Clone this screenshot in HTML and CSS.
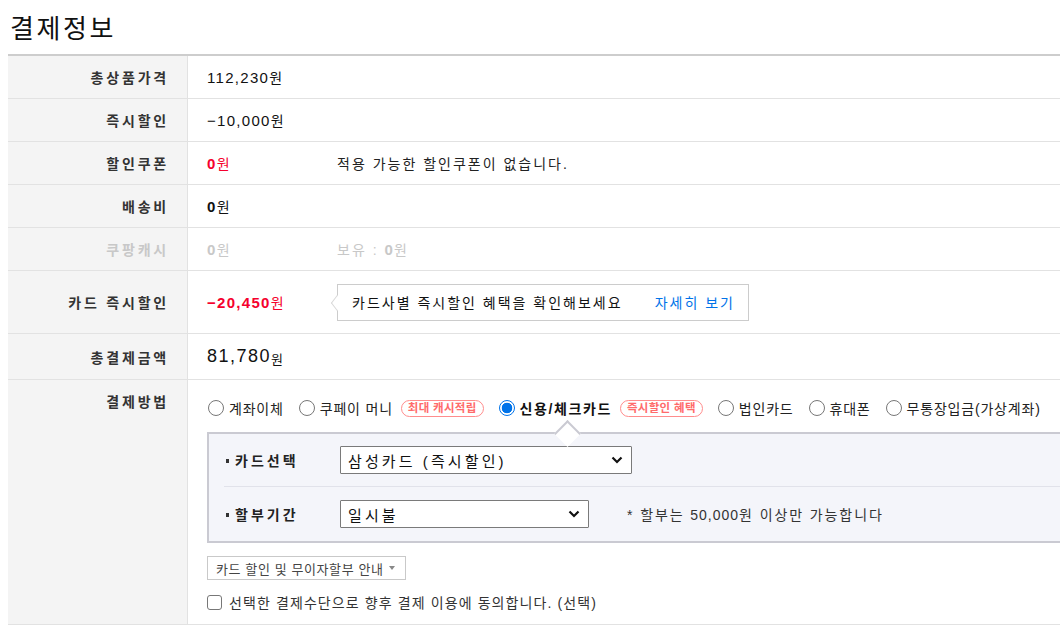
FILE: index.html
```html
<!DOCTYPE html>
<html lang="ko">
<head>
    <meta charset="UTF-8">
    <title>결제정보</title>
    <link rel="stylesheet" href="styles.css">
</head>
<body>
    <h1 class="title">결제정보</h1>

    <div class="pay-table">
        <div class="row">
            <div class="label">총상품가격</div>
            <div class="value"><span class="num">112,230</span>원</div>
        </div>
        <div class="row">
            <div class="label">즉시할인</div>
            <div class="value"><span class="num">−10,000</span>원</div>
        </div>
        <div class="row">
            <div class="label">할인쿠폰</div>
            <div class="value">
                <span class="amount red"><b class="num">0</b>원</span>
                <span class="note">적용 가능한 할인쿠폰이 없습니다.</span>
            </div>
        </div>
        <div class="row">
            <div class="label">배송비</div>
            <div class="value"><b class="num">0</b>원</div>
        </div>
        <div class="row disabled">
            <div class="label">쿠팡캐시</div>
            <div class="value">
                <span class="amount"><b class="num">0</b>원</span>
                <span class="note">보유 : <b class="num">0</b>원</span>
            </div>
        </div>
        <div class="row row-card">
            <div class="label">카드 즉시할인</div>
            <div class="value">
                <span class="amount red"><b class="num">−20,450</b>원</span>
                <div class="tip">
                    <span>카드사별 즉시할인 혜택을 확인해보세요</span>
                    <a href="#" class="tip-link">자세히 보기</a>
                </div>
            </div>
        </div>
        <div class="row row-total">
            <div class="label">총결제금액</div>
            <div class="value"><span class="num total">81,780</span><span class="won">원</span></div>
        </div>
        <div class="row row-method">
            <div class="label">결제방법</div>
            <div class="value method">
                <div class="radios">
                    <label class="radio"><span class="dot"></span>계좌이체</label>
                    <label class="radio"><span class="dot"></span>쿠페이 머니<span class="badge">최대 캐시적립</span></label>
                    <label class="radio checked"><span class="dot"></span>신용/체크카드<span class="badge">즉시할인 혜택</span></label>
                    <label class="radio"><span class="dot"></span>법인카드</label>
                    <label class="radio"><span class="dot"></span>휴대폰</label>
                    <label class="radio"><span class="dot"></span>무통장입금(가상계좌)</label>
                </div>

                <div class="card-panel">
                    <div class="panel-row first">
                        <div class="panel-label">카드선택</div>
                        <div class="select wide">
                            <span>삼성카드 (즉시할인)</span>
                            <svg width="12" height="8" viewBox="0 0 12 8"><path d="M1.5 1.5 L6 6 L10.5 1.5" fill="none" stroke="#111" stroke-width="2.2"/></svg>
                        </div>
                    </div>
                    <div class="panel-row">
                        <div class="panel-label">할부기간</div>
                        <div class="select">
                            <span>일시불</span>
                            <svg width="12" height="8" viewBox="0 0 12 8"><path d="M1.5 1.5 L6 6 L10.5 1.5" fill="none" stroke="#111" stroke-width="2.2"/></svg>
                        </div>
                        <span class="panel-note">* 할부는 <span class="num">50,000</span>원 이상만 가능합니다</span>
                    </div>
                </div>

                <button class="guide-btn">카드 할인 및 무이자할부 안내 <span class="caret"></span></button>

                <label class="agree"><span class="box"></span>선택한 결제수단으로 향후 결제 이용에 동의합니다. (선택)</label>
            </div>
        </div>
    </div>
</body>
</html>
```

FILE: styles.css
```css
:root {
    --label-bg: #f4f4f4;
    --line: #e2e2e2;
    --red: #f5002d;
    --blue: #0073e9;
    --text: #111;
    --label-text: #333;
}

* {
    box-sizing: border-box;
}

html,
body {
    overflow: hidden;
}

body {
    margin: 8px 0 0 8px;
    font-family: "Liberation Sans", "Noto Sans CJK KR", sans-serif;
    font-size: 14px;
    color: var(--text);
    background: #fff;
}

.title {
    margin: 0 0 6px;
    padding: 3px 2px 0;
    font-size: 26px;
    line-height: 37px;
    font-weight: 400;
    letter-spacing: 2.6px;
    color: #111;
}

.pay-table {
    width: 1080px;
    border-top: 2px solid #cdcdcd;
}

.row {
    display: grid;
    grid-template-columns: 180px 1fr;
    border-bottom: 1px solid var(--line);
    min-height: 43px;
}

.label {
    background: var(--label-bg);
    border-right: 1px solid var(--line);
    padding-right: 18px;
    font-weight: 700;
    color: var(--label-text);
    letter-spacing: 2.8px;
    display: flex;
    align-items: center;
    justify-content: flex-end;
}

.value {
    padding-left: 19px;
    display: flex;
    align-items: center;
    letter-spacing: 1px;
}

.num {
    font-family: "Liberation Sans", sans-serif;
    font-size: 15px;
    letter-spacing: 1.3px;
}

.amount {
    width: 130px;
    flex: none;
}

.red {
    color: var(--red);
}

.note {
    letter-spacing: 2px;
    color: #222;
}

.disabled .label,
.disabled .value,
.disabled .note {
    color: #c8c8c8;
}

.row-card {
    min-height: 63px;
}

.tip {
    position: relative;
    display: flex;
    align-items: center;
    gap: 32px;
    height: 37px;
    padding: 0 13px 0 14px;
    border: 1px solid #cccccc;
    font-size: 14px;
    letter-spacing: 2px;
    color: #111;
}

.tip::before {
    content: "";
    position: absolute;
    left: -6px;
    top: 13px;
    width: 9px;
    height: 9px;
    background: #fff;
    border-left: 1px solid #d8d8d8;
    border-bottom: 1px solid #d8d8d8;
    transform: rotate(45deg) skew(8deg, 8deg);
}

.tip-link {
    color: var(--blue);
    text-decoration: none;
}

.row-total {
    min-height: 46px;
}

.total {
    font-size: 18px;
    letter-spacing: 1.5px;
}

.won {
    font-size: 13px;
    padding-top: 3px;
}

.row-method .label {
    align-items: flex-start;
    padding-top: 11px;
}

.method {
    flex-direction: column;
    align-items: flex-start;
    padding-top: 18px;
    padding-bottom: 12px;
}

.radios {
    display: flex;
    align-items: center;
    gap: 14px;
    height: 20px;
    font-size: 14px;
    letter-spacing: 0.8px;
    color: #222;
}

.radio {
    display: flex;
    align-items: center;
    white-space: nowrap;
}

.dot {
    width: 16px;
    height: 16px;
    border: 1px solid #777;
    border-radius: 50%;
    margin: 0 5px 0 1px;
    background: #fff;
    flex: none;
}

.checked {
    font-weight: 700;
    color: #111;
    letter-spacing: 1.6px;
}

.checked .dot {
    border: 1px solid var(--blue);
    background: radial-gradient(circle, var(--blue) 0 5px, #fff 5.6px);
}

.badge {
    margin-left: 8px;
    padding: 0 6px;
    height: 17px;
    line-height: 15px;
    border: 1px solid #ff8d8d;
    border-radius: 9px;
    color: #ff6b6b;
    font-size: 11.5px;
    letter-spacing: 0.3px;
    font-weight: 700;
}

.card-panel {
    position: relative;
    margin-top: 14px;
    width: 870px;
    background: #f4f5fa;
    border: 2px solid #cacad2;
    border-right: none;
    padding: 12px 0 13px 15px;
    letter-spacing: 0;
}

.card-panel::before {
    content: "";
    position: absolute;
    top: -10px;
    left: 349px;
    width: 17px;
    height: 17px;
    background: #fff;
    border-top: 2px solid #cacad2;
    border-left: 2px solid #cacad2;
    transform: rotate(45deg);
}

.panel-row {
    display: flex;
    align-items: center;
}

.panel-row.first {
    padding-bottom: 12px;
    border-bottom: 1px solid #e1e2ea;
}

.panel-row + .panel-row {
    padding-top: 13px;
}

.panel-label {
    width: 116px;
    font-weight: 700;
    color: #222;
    letter-spacing: 3px;
    display: flex;
    align-items: center;
}

.panel-label::before {
    content: "";
    width: 3px;
    height: 4px;
    background: #333;
    margin: 2px 6px 0 2px;
}

.select {
    display: flex;
    align-items: center;
    justify-content: space-between;
    width: 249px;
    height: 28px;
    padding: 0 8px 0 7px;
    background: #fff;
    border: 1px solid #7a7a7a;
    border-radius: 1px;
    font-size: 15px;
    letter-spacing: 3.1px;
    color: #111;
}

.select.wide {
    width: 292px;
}

.panel-note {
    margin-left: 38px;
    font-size: 14px;
    color: #333;
    letter-spacing: 1.9px;
}

.panel-note .num {
    font-size: 14px;
    letter-spacing: 1px;
}

.guide-btn {
    margin-top: 13px;
    height: 24px;
    padding: 0 10px 0 8px;
    background: #fff;
    border: 1px solid #c9c9c9;
    font-family: inherit;
    font-size: 13px;
    letter-spacing: 0.6px;
    color: #444;
    display: flex;
    align-items: center;
    gap: 2px;
}

.caret {
    width: 0;
    height: 0;
    border-left: 3px solid transparent;
    border-right: 3px solid transparent;
    border-top: 4px solid #888;
    margin-left: 3px;
}

.agree {
    display: flex;
    align-items: center;
    margin-top: 12px;
    color: #333;
    letter-spacing: 1.1px;
}

.box {
    width: 15px;
    height: 15px;
    border: 1px solid #777;
    border-radius: 3px;
    background: #fff;
    margin-right: 7px;
}
```
